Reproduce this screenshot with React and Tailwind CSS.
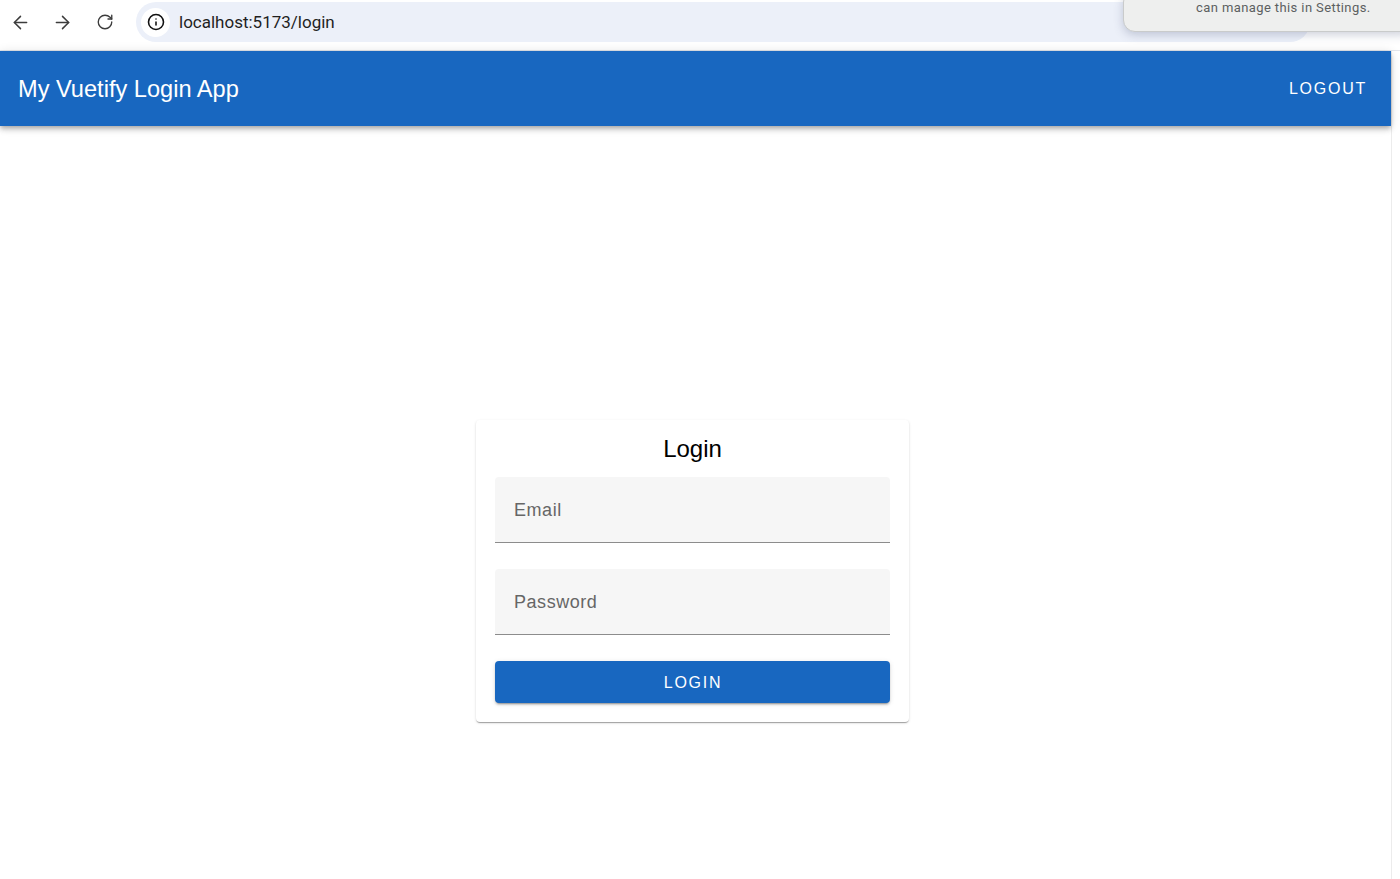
import React from "react";
import { ArrowLeft, ArrowRight, RotateCw, Info } from "lucide-react";

const sans = "font-['Liberation_Sans',Arial,sans-serif]";

function Field({ label }) {
  return (
    <div className={`h-[66px] rounded-t-[4px] bg-[#f6f6f6] border-b border-[#8c8c8c] flex items-center pl-[19px] pt-[2px] text-[18px] tracking-[0.55px] text-[#666666] ${sans}`}>
      {label}
    </div>
  );
}

export default function App() {
  return (
    <div className={`relative h-[879px] w-full overflow-hidden bg-white flex flex-col ${sans}`}>
      {/* Browser toolbar */}
      <div className="h-[51px] shrink-0 flex items-start bg-white border-b border-[#e3e6ec]">
        <div className="flex items-center h-[44px] pl-[10px] text-[#3c3c3c]">
          <ArrowLeft size={21} strokeWidth={1.7} />
          <ArrowRight size={21} strokeWidth={1.7} className="ml-[21px]" />
          <RotateCw size={18} strokeWidth={1.8} className="ml-[23px]" />
        </div>
        <div className="ml-[22px] mt-[2px] h-[40px] w-[1174px] rounded-full bg-[#ecf0f9] flex items-center pl-[5px]">
          <div className="w-[29px] h-[29px] rounded-full bg-white flex items-center justify-center text-[#111111]">
            <Info size={18} strokeWidth={2.1} />
          </div>
          <span className="ml-[9px] pt-[1px] text-[17px] text-[#1f1f1f] font-['Roboto',sans-serif]">localhost:5173/login</span>
        </div>
      </div>

      {/* Page area with narrow scrollbar gutter */}
      <div className="flex-1 flex min-h-0">
        <div className="flex-1 flex flex-col min-w-0">
          <header className="relative h-[75px] shrink-0 bg-[#1867c0] flex items-center justify-between pl-[18px] pr-[24px] text-white shadow-[0_2px_4px_-1px_rgba(0,0,0,0.2),0_4px_5px_0_rgba(0,0,0,0.14),0_1px_10px_0_rgba(0,0,0,0.12)]">
            <span className="text-[23.6px] leading-none pt-[2px]">My Vuetify Login App</span>
            <span className="text-[16px] tracking-[1.75px] leading-none">LOGOUT</span>
          </header>
          <main className="flex-1 flex justify-center items-start pt-[294px]">
            <div className="w-[433px] h-[302px] mr-[6px] bg-white rounded-[4px] px-[19px] shadow-[0_2px_1px_-1px_rgba(0,0,0,0.2),0_1px_1px_0_rgba(0,0,0,0.14),0_1px_3px_0_rgba(0,0,0,0.12)] flex flex-col">
              <h1 className="h-[57px] shrink-0 flex items-center justify-center pt-[1px] text-[24px] text-black font-normal">Login</h1>
              <div className="flex flex-col gap-[26px]">
                <Field label="Email" />
                <Field label="Password" />
              </div>
              <button className="mt-[26px] h-[42px] pt-[2px] pl-[1px] rounded-[4px] bg-[#1867c0] text-white text-[16px] tracking-[1.7px] shadow-[0_3px_1px_-2px_rgba(0,0,0,0.2),0_2px_2px_0_rgba(0,0,0,0.14),0_1px_5px_0_rgba(0,0,0,0.12)]">
                LOGIN
              </button>
            </div>
          </main>
        </div>
        <div className="w-[9px] shrink-0 bg-white border-l border-[#ececec]" />
      </div>

      {/* Browser notification popup overlay */}
      <div className="absolute top-[-10px] left-[1123px] w-[290px] h-[42px] rounded-[12px] bg-[#eeefee] border border-[#c9cbcb] shadow-[0_3px_10px_rgba(60,70,110,0.25)] flex items-end pl-[72px] pb-[17px]">
        <span className="text-[13px] leading-none tracking-[0.4px] text-[#5c5f61] font-['Roboto',sans-serif]">can manage this in Settings.</span>
      </div>
    </div>
  );
}
